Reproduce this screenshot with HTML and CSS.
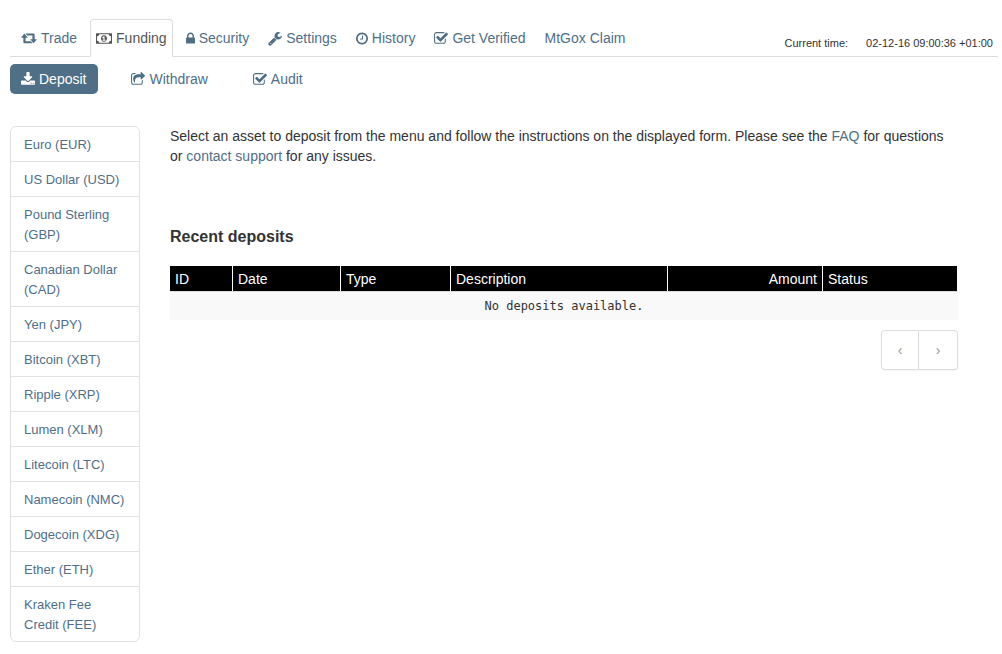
FILE: index.html
```html
<!DOCTYPE html>
<html lang="en">
<head>
<meta charset="utf-8">
<title>Funding - Deposit</title>
<meta name="viewport" content="width=device-width, initial-scale=1">
<link rel="stylesheet" href="styles.css">
</head>
<body>
<svg class="sprite" aria-hidden="true">
  <symbol id="i-retweet" viewBox="0 1 15 14"><path d="M3.200 3.400L6.400 7.300H4.300V10.600H9.200L10.900 12.500H3.200Q2.200 12.500 2.200 11.500V7.300H0ZM11.800 12.500L15 8.600H12.800V4.400Q12.800 3.400 11.800 3.400H4.100L5.800 5.300H10.700V8.600H8.600Z"/></symbol>
  <symbol id="i-money" viewBox="0 0 15 14"><path fill-rule="evenodd" d="M0.500 2H14.500Q15 2 15 2.500V11.500Q15 12 14.500 12H0.500Q0 12 0 11.500V2.500Q0 2 0.500 2ZM3 3Q3 5 1 5V9Q3 9 3 11H12Q12 9 14 9V5Q12 5 12 3ZM7.500 4C9.300 4 10.300 5.500 10.300 7S9.300 10 7.500 10S4.700 8.500 4.700 7S5.700 4 7.500 4ZM7.100 5L5.800 6.200L6.400 6.900L7 6.500V8.200H6.100V9H9V8.200H8V5Z"/></symbol>
  <symbol id="i-lock" viewBox="320 0 1152 1792"><path d="M640 768h512v-192q0-106-75-181t-181-75-181 75-75 181v192zm832 96v576q0 40-28 68t-68 28h-960q-40 0-68-28t-28-68v-576q0-40 28-68t68-28h32v-192q0-184 132-316t316-132 316 132 132 316v192h32q40 0 68 28t28 68z"/></symbol>
  <symbol id="i-wrench" viewBox="64 0 1664 1792"><path d="M448 1472q0-26-19-45t-45-19-45 19-19 45 19 45 45 19 45-19 19-45zm644-420l-682 682q-37 37-90 37-52 0-91-37l-106-108q-38-36-38-90 0-53 38-91l681-681q39 98 114.500 173.500t173.500 114.500zm634-435q0 39-23 106-47 134-164.500 217.500t-258.500 83.500q-185 0-316.500-131.500t-131.500-316.500 131.500-316.500 316.500-131.500q58 0 121.500 16.500t107.500 46.500q16 11 16 28t-16 28l-293 169v224l193 107q5-3 79-48.500t135.500-81 70.500-35.500q15 0 23.500 10t8.500 25z"/></symbol>
  <symbol id="i-clock" viewBox="128 0 1536 1792"><path d="M1024 544v448q0 14-9 23t-23 9h-320q-14 0-23-9t-9-23v-64q0-14 9-23t23-9h224v-352q0-14 9-23t23-9h64q14 0 23 9t9 23zm416 352q0-148-73-273t-198-198-273-73-273 73-198 198-73 273 73 273 198 198 273 73 273-73 198-198 73-273zm224 0q0 209-103 385.500t-279.500 279.500-385.500 103-385.500-103-279.500-279.500-103-385.500 103-385.500 279.500-279.500 385.500-103 385.500 103 279.500 279.500 103 385.500z"/></symbol>
  <symbol id="i-check" viewBox="64 0 1664 1792"><path d="M1472 930v318q0 119-84.500 203.500t-203.500 84.500h-832q-119 0-203.500-84.500t-84.500-203.500v-832q0-119 84.500-203.500t203.500-84.500h832q63 0 117 25 15 7 18 23 3 17-9 29l-49 49q-10 10-23 10-3 0-9-2-23-6-45-6h-832q-66 0-113 47t-47 113v832q0 66 47 113t113 47h832q66 0 113-47t47-113v-254q0-13 9-22l64-64q10-10 23-10 6 0 12 3 20 8 20 29zm231-489l-814 814q-24 24-57 24t-57-24l-430-430q-24-24-24-57t24-57l110-110q24-24 57-24t57 24l263 263 647-647q24-24 57-24t57 24l110 110q24 24 24 57t-24 57z"/></symbol>
  <symbol id="i-download" viewBox="64 0 1664 1792"><path d="M1344 1344q0-26-19-45t-45-19-45 19-19 45 19 45 45 19 45-19 19-45zm256 0q0-26-19-45t-45-19-45 19-19 45 19 45 45 19 45-19 19-45zm128-224v320q0 40-28 68t-68 28h-1472q-40 0-68-28t-28-68v-320q0-40 28-68t68-28h465l135 136q58 56 136 56t136-56l136-136h464q40 0 68 28t28 68zm-325-569q17 41-14 70l-448 448q-18 19-45 19t-45-19l-448-448q-31-29-14-70 17-39 59-39h256v-448q0-26 19-45t45-19h256q26 0 45 19t19 45v448h256q42 0 59 39z"/></symbol>
  <symbol id="i-share" viewBox="64 0 1664 1792"><path d="M1472 989v259q0 119-84.500 203.500t-203.500 84.500h-832q-119 0-203.500-84.500t-84.500-203.500v-832q0-119 84.500-203.500t203.500-84.500h255q13 0 22.500 9.500t9.500 22.500q0 27-26 32-77 26-133 60-10 4-16 4h-112q-66 0-113 47t-47 113v832q0 66 47 113t113 47h832q66 0 113-47t47-113v-214q0-19 18-29 28-13 54-37 16-16 35-8 21 9 21 29zm237-496l-384 384q-18 19-45 19-12 0-25-5-39-17-39-59v-192h-160q-323 0-438 131-119 137-74 473 3 23-20 34-8 2-12 2-16 0-26-13-10-14-21-31t-39.500-68.500-49.500-99.500-38.500-114-17.500-122q0-49 3.500-91t14-90 28-88 47-81.500 68.500-74 94.500-61.500 124.500-48.500 159.500-30.500 196.500-11h160v-192q0-42 39-59 13-5 25-5 26 0 45 19l384 384q19 19 19 45t-19 45z"/></symbol>
</svg>

<header class="topbar">
  <nav class="tabs" aria-label="Main">
    <a class="tab" href="#trade"><svg class="icon icon-wide"><use href="#i-retweet"/></svg>Trade</a>
    <a class="tab tab-active" href="#funding" aria-current="page"><svg class="icon icon-wide"><use href="#i-money"/></svg>Funding</a>
    <a class="tab" href="#security"><svg class="icon icon-narrow"><use href="#i-lock"/></svg>Security</a>
    <a class="tab" href="#settings"><svg class="icon"><use href="#i-wrench"/></svg>Settings</a>
    <a class="tab" href="#history"><svg class="icon icon-round"><use href="#i-clock"/></svg>History</a>
    <a class="tab" href="#verify"><svg class="icon"><use href="#i-check"/></svg>Get Verified</a>
    <a class="tab" href="#mtgox">MtGox Claim</a>
  </nav>
  <div class="clock"><span>Current time:</span><time>02-12-16 09:00:36 +01:00</time></div>
</header>

<nav class="pills" aria-label="Funding">
  <a class="pill pill-active" href="#deposit" aria-current="page"><svg class="icon"><use href="#i-download"/></svg>Deposit</a>
  <a class="pill" href="#withdraw"><svg class="icon"><use href="#i-share"/></svg>Withdraw</a>
  <a class="pill" href="#audit"><svg class="icon"><use href="#i-check"/></svg>Audit</a>
</nav>

<div class="layout">
  <nav class="assets" aria-label="Assets">
    <a class="asset" href="#eur">Euro (EUR)</a>
    <a class="asset" href="#usd">US Dollar (USD)</a>
    <a class="asset" href="#gbp">Pound Sterling (GBP)</a>
    <a class="asset" href="#cad">Canadian Dollar (CAD)</a>
    <a class="asset" href="#jpy">Yen (JPY)</a>
    <a class="asset" href="#xbt">Bitcoin (XBT)</a>
    <a class="asset" href="#xrp">Ripple (XRP)</a>
    <a class="asset" href="#xlm">Lumen (XLM)</a>
    <a class="asset" href="#ltc">Litecoin (LTC)</a>
    <a class="asset" href="#nmc">Namecoin (NMC)</a>
    <a class="asset" href="#xdg">Dogecoin (XDG)</a>
    <a class="asset" href="#eth">Ether (ETH)</a>
    <a class="asset" href="#fee">Kraken Fee Credit (FEE)</a>
  </nav>

  <main class="content">
    <p class="intro">Select an asset to deposit from the menu and follow the instructions on the displayed form. Please see the <a href="#faq">FAQ</a> for questions or <a href="#support">contact support</a> for any issues.</p>
    <h2 class="heading">Recent deposits</h2>
    <table class="deposits">
      <thead>
        <tr>
          <th class="col-id" scope="col">ID</th>
          <th class="col-date" scope="col">Date</th>
          <th class="col-type" scope="col">Type</th>
          <th scope="col">Description</th>
          <th class="col-amount" scope="col">Amount</th>
          <th class="col-status" scope="col">Status</th>
        </tr>
      </thead>
      <tbody>
        <tr><td colspan="6">No deposits available.</td></tr>
      </tbody>
    </table>
    <div class="pager">
      <button class="page-button" type="button" aria-label="Previous page">‹</button>
      <button class="page-button" type="button" aria-label="Next page">›</button>
    </div>
  </main>
</div>
</body>
</html>
```

FILE: styles.css
```css
* {
  box-sizing: border-box;
}

body {
  margin: 0;
  padding: 19px 4px 12px 10px;
  background: #fff;
  color: #333;
  font: 14px/20px "Liberation Sans", Arial, sans-serif;
}

a {
  color: #4f6f87;
  text-decoration: none;
}

.sprite {
  display: none;
}

.icon {
  width: 14px;
  height: 15px;
  flex: none;
  fill: currentColor;
}

.icon-wide {
  width: 16px;
}

.icon-narrow {
  width: 9px;
}

.icon-round {
  width: 12px;
}

.topbar {
  display: flex;
  justify-content: space-between;
  border-bottom: 1px solid #ddd;
}

.tabs {
  display: flex;
  gap: 7px;
  padding-left: 5px;
}

.tab {
  display: flex;
  align-items: center;
  gap: 4px;
  height: 38px;
  margin-bottom: -1px;
  padding: 0 5px;
  border: 1px solid transparent;
  border-radius: 4px 4px 0 0;
  white-space: nowrap;
}

.tab-active {
  border-color: #ddd;
  border-bottom-color: #fff;
  background: #fff;
  color: #555;
}

.clock {
  display: flex;
  gap: 18px;
  padding: 14px 5px 0 0;
  font-size: 11px;
  white-space: nowrap;
}

.pills {
  display: flex;
  gap: 22px;
  padding-top: 7px;
}

.pill {
  display: flex;
  align-items: center;
  gap: 4px;
  height: 30px;
  padding: 0 12px 0 11px;
  border-radius: 5px;
}

.pill-active {
  background: #4f6f87;
  color: #fff;
}

.layout {
  display: flex;
  align-items: flex-start;
  gap: 30px;
  margin-top: 32px;
  padding-right: 40px;
}

.assets {
  flex: 0 0 130px;
  border: 1px solid #e2e2e2;
  border-radius: 6px;
}

.asset {
  display: block;
  padding: 8px 13px 6px;
  font-size: 13px;
}

.asset + .asset {
  border-top: 1px solid #e2e2e2;
}

.content {
  flex: 1;
  min-width: 0;
}

.intro {
  margin: 0;
}

.heading {
  margin: 61px 0 19px;
  font-size: 16px;
  line-height: 20px;
}

.deposits {
  width: 100%;
  table-layout: fixed;
  border-collapse: separate;
  border-spacing: 0;
}

.deposits th {
  padding: 3px 5px 2px;
  border-right: 1px solid #fff;
  background: #000;
  color: #fff;
  font-weight: normal;
  text-align: left;
}

.deposits td {
  padding: 4px 5px;
  border-top: 1px solid #ddd;
  background: #f9f9f9;
  font: 12px/20px "DejaVu Sans Mono", monospace;
  text-align: center;
}

.col-id {
  width: 63px;
}

.col-date {
  width: 108px;
}

.col-type {
  width: 110px;
}

.deposits .col-amount {
  width: 155px;
  text-align: right;
}

.col-status {
  width: 135px;
}

.pager {
  display: flex;
  justify-content: flex-end;
  margin-top: 10px;
}

.page-button {
  width: 38px;
  height: 40px;
  padding: 0;
  border: 1px solid #ddd;
  border-radius: 4px 0 0 4px;
  background: #fff;
  color: #999;
  font: 14px/20px "Liberation Sans", Arial, sans-serif;
  box-shadow: 0 1px 2px rgba(0, 0, 0, 0.05);
}

.page-button + .page-button {
  width: 39px;
  border-left: 0;
  border-radius: 0 4px 4px 0;
}
```
